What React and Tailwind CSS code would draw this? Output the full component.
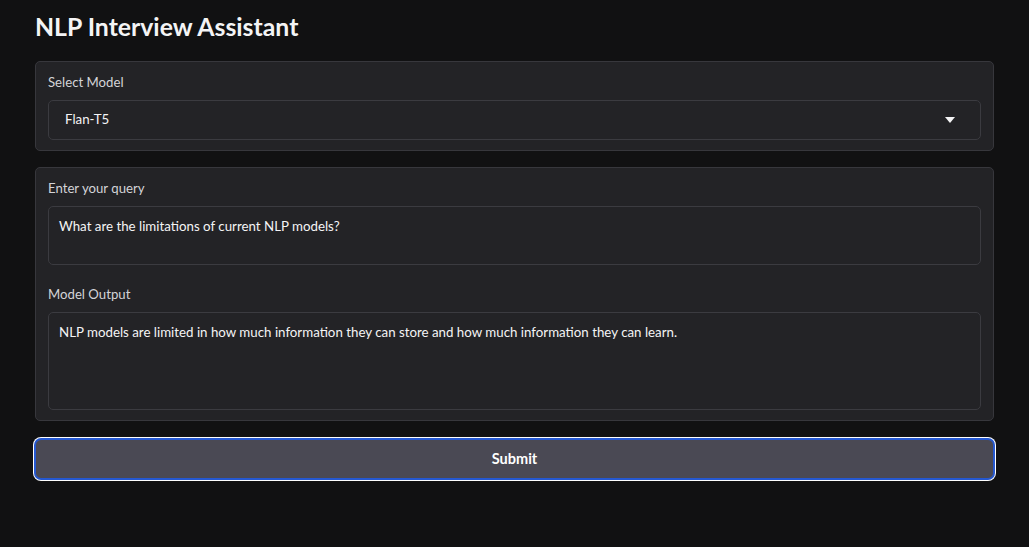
function Panel({ children }) {
  return (
    <div className="rounded-[5px] border border-[#37373c] bg-[#232326] px-3 pt-[10px] pb-[10px]">
      {children}
    </div>
  );
}

function Label({ children }) {
  return <p className="mb-[8px] text-[13.2px] leading-5 text-[#d4d4d8]">{children}</p>;
}

function Box({ height, children }) {
  return (
    <div
      className={`rounded-[5px] border border-[#3b3b40] bg-[#232326] px-[10px] py-[9px] text-[13.3px] leading-5 text-[#f4f4f5] ${height}`}
    >
      {children}
    </div>
  );
}

export default function App() {
  return (
    <div
      className="min-h-[547px] bg-[#111112] px-[35px] pt-[10px] text-[#f4f4f5]"
      style={{ fontFamily: 'Lato, "Noto Sans", sans-serif' }}
    >
      <h1 className="mb-[17px] text-[24.8px] font-bold leading-[34px] text-[#f4f4f5]">
        NLP Interview Assistant
      </h1>

      <Panel>
        <Label>Select Model</Label>
        <div className="flex h-10 items-center justify-between rounded-[5px] border border-[#3b3b40] bg-[#232326] pl-4 pr-[25px] text-[13.3px] text-[#f4f4f5]">
          <span>Flan-T5</span>
          <svg width="10" height="6" viewBox="0 0 10 6">
            <path d="M0 0 L10 0 L5 6 Z" fill="#f4f4f5" />
          </svg>
        </div>
      </Panel>

      <div className="mt-4">
        <Panel>
          <Label>Enter your query</Label>
          <Box height="h-[59px]">What are the limitations of current NLP models?</Box>
          <div className="mt-[19px]">
            <Label>Model Output</Label>
          </div>
          <Box height="h-[98px]">
            NLP models are limited in how much information they can store and how much information they can learn.
          </Box>
        </Panel>
      </div>

      <button className="mt-[18px] flex h-[40px] w-full items-center justify-center rounded-[6px] border border-[#2558d1] bg-[#4a4954] text-[14.5px] font-bold text-white shadow-[0_0_0_1px_#2558d1,0_0_0_2px_#ffffff]">
        Submit
      </button>
    </div>
  );
}
